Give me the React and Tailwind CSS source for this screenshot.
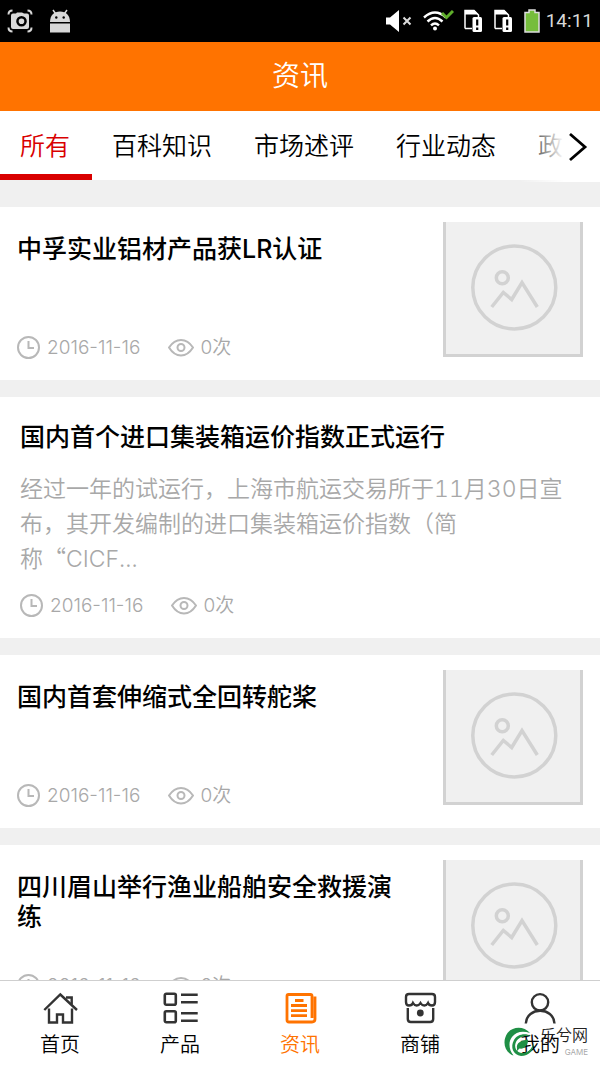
import { useState } from "react";
import clsx from "clsx";

const tabs = ["所有", "百科知识", "市场述评", "行业动态", "政策法规"];

const articles = [
  {
    id: 1,
    title: "中孚实业铝材产品获LR认证",
    date: "2016-11-16",
    views: 0,
    hasImage: true,
  },
  {
    id: 2,
    title: "国内首个进口集装箱运价指数正式运行",
    summary: (
      <>
        经过一年的试运行，上海市航运交易所于11月30日宣布，其开发编制的进口集装箱运价指数（简
        <span className="whitespace-nowrap">
          称<span className="font-['Noto_Sans_CJK_SC',sans-serif] leading-none">“</span>CICF...
        </span>
      </>
    ),
    date: "2016-11-16",
    views: 0,
    hasImage: false,
  },
  {
    id: 3,
    title: "国内首套伸缩式全回转舵桨",
    date: "2016-11-16",
    views: 0,
    hasImage: true,
  },
  {
    id: 4,
    title: "四川眉山举行渔业船舶安全救援演练",
    date: "2016-11-16",
    views: 0,
    hasImage: true,
  },
];

function StatusBar() {
  return (
    <div className="flex h-[42px] shrink-0 items-center bg-black px-[7px] text-white">
      {/* Screenshot + debug notifications */}
      <svg width="26" height="24" viewBox="0 0 26 24" className="text-[#d8d8d8]">
        <path
          fill="none"
          stroke="currentColor"
          strokeWidth="2"
          d="M1.500 5.500Q1.500 1.500 5.500 1.500M20.500 1.500Q24.500 1.500 24.500 5.500M1.500 18.500Q1.500 22.500 5.500 22.500M20.500 22.500Q24.500 22.500 24.500 18.500"
        />
        <path
          fill="currentColor"
          fillRule="evenodd"
          d="M6 4.500H9L10 3.500H15L17 4.500H20Q22 4.500 22 6.500V18Q22 20 20 20H6Q4 20 4 18V6.500Q4 4.500 6 4.500ZM14.500 7A5.300 5.300 0 1 0 14.500 17.600A5.300 5.300 0 1 0 14.500 7ZM14.500 9.500A2.800 2.800 0 1 1 14.500 15.100A2.800 2.800 0 1 1 14.500 9.500Z"
        />
      </svg>
      <svg width="20" height="24" viewBox="0 0 20 24" className="ml-[17px]">
        <path d="M3 1L5.500 4.500M17 1L14.500 4.500" stroke="#d8d8d8" strokeWidth="1.500" />
        <path d="M0 13C0 6.500 4 2.500 10 2.500S20 6.500 20 13Z" fill="#d8d8d8" />
        <path d="M0 14.500H20V23.500H0Z" fill="#d8d8d8" />
        <circle cx="6.300" cy="8.500" r="1.200" />
        <circle cx="13.700" cy="8.500" r="1.200" />
      </svg>

      <div className="ml-auto flex items-center">
        <svg width="26" height="24" viewBox="0 0 26 24">
          <path d="M0 8.500H4L13 1V23L4 15.500H0Z" fill="#fff" />
          <path d="M17.500 8.500L24.500 15.500M24.500 8.500L17.500 15.500" stroke="#ddd" strokeWidth="2" />
        </svg>
        <svg width="31" height="22" viewBox="0 0 31 22" className="ml-[11px]">
          <g fill="none" stroke="#fff" strokeWidth="2.400">
            <path d="M1 7.500Q12 -2.500 23 7.500" />
            <path d="M4.500 11.500Q12 4.500 19.500 11.500" />
            <path d="M8 15.300Q12 11.500 16 15.300" />
          </g>
          <circle cx="12" cy="18.500" r="2" fill="#fff" />
          <path d="M19 3L23.500 7.500L30 1" fill="none" stroke="#5fae2b" strokeWidth="3" />
        </svg>
        <SimIcon className="ml-2.5" />
        <SimIcon className="ml-3" />
        <svg width="16" height="24" viewBox="0 0 16 24" className="ml-3">
          <path
            d="M1 3.500H5V1H11V3.500H15V23H1Z"
            fill="#76bd3c"
            stroke="#ddd"
            strokeWidth="1.500"
          />
        </svg>
        <span className="ml-1.5 font-['Roboto',sans-serif] text-[19px] leading-6 text-[#d8d8d8]">
          14:11
        </span>
      </div>
    </div>
  );
}

function SimIcon({ className }) {
  return (
    <svg width="18" height="24" viewBox="0 0 18 24" className={className}>
      <path d="M1 19.500V1.500H10L14.500 6V8" fill="none" stroke="#fff" strokeWidth="1.500" />
      <path d="M1 1H10L14.500 5.500H1Z" fill="#fff" />
      <path d="M1 19.500H8" stroke="#fff" strokeWidth="1.500" />
      <rect x="8.500" y="8" width="9.500" height="15" rx="1.500" fill="#fff" />
      <path d="M13.200 10.500V16.500M13.200 18.500V21" stroke="#000" strokeWidth="2.200" />
    </svg>
  );
}

function ClockIcon() {
  return (
    <svg width="24" height="24" viewBox="0 0 24 24" fill="none" stroke="#b8b8b8" strokeWidth="2">
      <circle cx="11.500" cy="11.500" r="10.500" />
      <path d="M11.500 5V12H17" />
    </svg>
  );
}

function EyeIcon() {
  return (
    <svg width="26" height="18" viewBox="0 0 26 18" fill="none" stroke="#b8b8b8" strokeWidth="2">
      <path d="M1 8.500Q6 1 13 1T25 8.500Q20 16.500 13 16.500T1 8.500Z" strokeLinejoin="round" />
      <circle cx="13" cy="8.500" r="3.500" />
    </svg>
  );
}

function ArticleMeta({ date, views }) {
  return (
    <div className="flex h-[26px] items-center text-[19px] font-[350] leading-[26px] text-[#a8a8a8]">
      <ClockIcon />
      <time className="ml-1.5">{date}</time>
      <span className="ml-7 flex items-center gap-1.5">
        <EyeIcon />
        {views}次
      </span>
    </div>
  );
}

function Placeholder() {
  return (
    <div className="h-[135px] w-[140px] shrink-0 border-x-[3px] border-b-[3px] border-[#d2d2d2] bg-[#f0f0f0]">
      <svg
        viewBox="3 0 134 132"
        className="h-full w-full"
        fill="none"
        stroke="#d2d2d2"
        strokeWidth="3.500"
      >
        <circle cx="71.300" cy="65.500" r="41.500" />
        <circle cx="59.300" cy="55.700" r="6" />
        <path d="M48.700 85L60.300 70.500L68.700 77.500L79 60.500L94.300 85" />
      </svg>
    </div>
  );
}

function ArticleCard({ article }) {
  if (!article.hasImage) {
    return (
      <article className="bg-white px-5 pb-[19px] pt-[25px]">
        <h2 className="text-[25px] font-medium leading-[30px] text-black">{article.title}</h2>
        <p className="mt-5 pr-2 text-[23px] font-[350] leading-[35px] text-[#a8a8a8] tabular-nums">
          {article.summary}
        </p>
        <div className="mt-4">
          <ArticleMeta date={article.date} views={article.views} />
        </div>
      </article>
    );
  }

  return (
    <article className="flex items-start bg-white px-[17px] pb-[19px] pt-[15px]">
      <div className="flex min-h-[139px] flex-1 flex-col justify-between pr-10 pt-3">
        <h2 className="text-[25px] font-medium leading-[30px] text-black">{article.title}</h2>
        <ArticleMeta date={article.date} views={article.views} />
      </div>
      <Placeholder />
    </article>
  );
}

const navItems = [
  {
    id: "home",
    label: "首页",
    icon: (
      <g strokeWidth="2.400">
        <path d="M2.300 20L18.300 4.500L35 20" />
        <path d="M24 7.500H29.700V14.500" />
        <path d="M7 18.500V32.500H15V24.500H21V32.500H30V18.500" />
      </g>
    ),
  },
  {
    id: "products",
    label: "产品",
    icon: (
      <g strokeWidth="2.600">
        <rect x="2.800" y="3.800" width="11" height="11" rx="1.500" />
        <rect x="2.800" y="21.200" width="11" height="11" rx="1.500" />
        <path d="M19 4.800H35.700M19 12.300H35.700M19 23.200H35.700M19 30.700H35.700" />
      </g>
    ),
  },
  {
    id: "news",
    label: "资讯",
    icon: (
      <g strokeWidth="2.800">
        <path d="M30 28V6Q30 4.500 28.500 4.500H6.500Q5 4.500 5 6V30Q5 32 7 32H30Q33 32 33 29V6.500" />
        <path d="M13 10.500H21.500M9 15.500H25M9 20.700H25M9 25.700H25" />
      </g>
    ),
  },
  {
    id: "shops",
    label: "商铺",
    icon: (
      <g strokeWidth="2.400">
        <path d="M4 12V7Q4 4 7 4H30Q33 4 33 7V12Q33 15.500 30 15.500Q27 15.500 26 13Q24.500 15.500 22.300 15.500Q20 15.500 18.500 13Q17 15.500 14.700 15.500Q12.500 15.500 11 13Q10 15.500 7 15.500Q4 15.500 4 12Z" />
        <path d="M5.800 18V29Q5.800 32 8.800 32H28.200Q31.200 32 31.200 29V18" />
        <circle cx="18.300" cy="23" r="3.400" fill="currentColor" stroke="none" />
      </g>
    ),
  },
  {
    id: "me",
    label: "我的",
    icon: (
      <g strokeWidth="2.400">
        <circle cx="18" cy="12.300" r="8.200" />
        <path d="M3.800 33.500C4.500 16.500 31.800 16.500 32.500 33.500" />
      </g>
    ),
  },
];

function BottomNav({ active, onChange }) {
  return (
    <nav className="relative grid shrink-0 grid-cols-5 border-t border-[#cfcfcf] bg-white">
      {navItems.map((item) => (
        <button
          key={item.id}
          type="button"
          onClick={() => onChange(item.id)}
          className={clsx(
            "flex flex-col items-center gap-1 pb-[7px] pt-[9px]",
            active === item.id ? "text-[#ff7300]" : "text-[#333]"
          )}
        >
          <svg width="36" height="36" viewBox="0 0 36 36" fill="none" stroke="currentColor">
            {item.icon}
          </svg>
          <span
            className={clsx(
              "text-xl font-[350] leading-[30px]",
              active !== item.id && "text-black"
            )}
          >
            {item.label}
          </span>
        </button>
      ))}
      <SiteMark />
    </nav>
  );
}

function SiteMark() {
  return (
    <div className="pointer-events-none absolute bottom-2.5 right-3 flex items-center gap-1.5">
      <svg width="30" height="30" viewBox="0 0 30 30" fill="#1f8f45">
        <path d="M26 6C20 -1 9 -1 3.500 6C-2 14 0 25 9.500 28.500C5 23 4 15 8 10C12 4.500 19 3.500 26 6Z" />
        <path
          fillRule="evenodd"
          d="M27 9C21 5.500 13 7.500 10 13C6 20 9 28 17 29C25 29 30 23 29.500 16C28 22 24 26 18.500 26C12.500 26 9.500 20 12 15C14.500 10 21 8 27 9Z"
        />
        <path d="M13 21.500C12 15.500 17 13.500 24 12.500C24.500 18 20 22.500 15.500 21.500L13 24Z" />
      </svg>
      <span className="flex flex-col items-end gap-1">
        <span className="text-base font-[350] leading-4 text-[#222]">乐兮网</span>
        <span className="text-[8px] leading-2.5 text-[#aaa]">GAME</span>
      </span>
    </div>
  );
}

export default function App() {
  const [activeTab, setActiveTab] = useState("所有");
  const [activeNav, setActiveNav] = useState("news");

  return (
    <div
      lang="zh-CN"
      className="flex h-screen flex-col overflow-hidden bg-[#f0f0f0] font-['Inter','Noto_Sans_CJK_SC',sans-serif]"
    >
      <StatusBar />

      <header className="flex h-[69px] shrink-0 items-center justify-center bg-[#ff7300] pb-0.5">
        <h1 className="text-[28px] font-[350] leading-10 text-white">资讯</h1>
      </header>

      {/* Category tabs */}
      <div className="relative shrink-0 bg-white">
        <div className="flex overflow-hidden">
          {tabs.map((tab) => (
            <button
              key={tab}
              type="button"
              onClick={() => setActiveTab(tab)}
              className={clsx(
                "h-[69px] shrink-0 border-b-[6px] pl-5 pr-[22px] pt-2 text-[25px] font-[350]",
                activeTab === tab
                  ? "border-[#d90000] text-[#d90000]"
                  : "border-transparent text-black"
              )}
            >
              {tab}
            </button>
          ))}
        </div>
        <button
          type="button"
          aria-label="更多分类"
          className="absolute right-0 top-0 flex h-[71px] w-20 items-center justify-end bg-linear-to-r from-transparent to-white to-55% pr-3"
        >
          <svg width="20" height="30" viewBox="0 0 20 30" fill="none" stroke="#000" strokeWidth="2.800">
            <path d="M2 2L17 15L2 28" />
          </svg>
        </button>
      </div>

      <main className="flex min-h-0 flex-1 flex-col gap-[17px] overflow-hidden pt-[27px]">
        {articles.map((article) => (
          <ArticleCard key={article.id} article={article} />
        ))}
      </main>

      <BottomNav active={activeNav} onChange={setActiveNav} />
    </div>
  );
}
